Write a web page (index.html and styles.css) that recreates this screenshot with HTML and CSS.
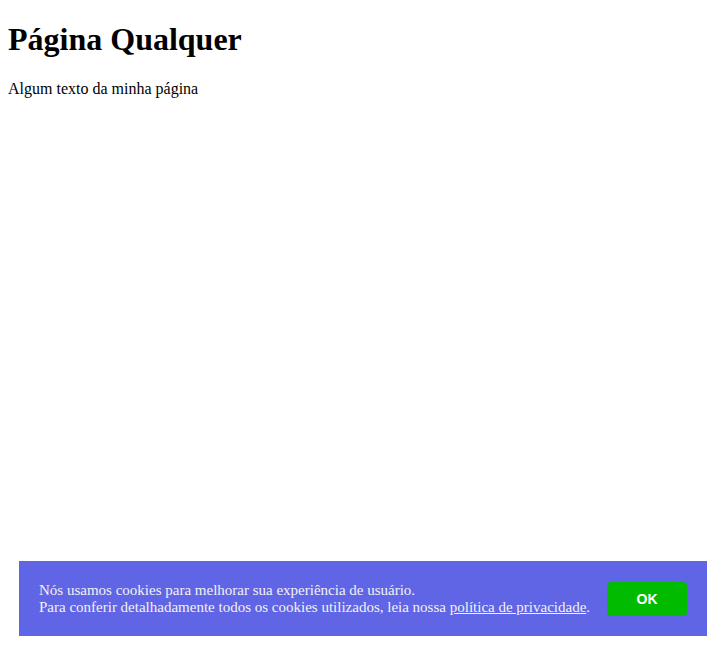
FILE: index.html
```html
<!DOCTYPE html>
<html lang="pt-BR">
<head>
<meta charset="utf-8">
<title>Página Qualquer</title>
<link rel="stylesheet" href="styles.css">
</head>
<body>
<h1 class="title">Página Qualquer</h1>
<p class="text">Algum texto da minha página</p>

<div class="cookie-banner">
  <div class="cookie-text">
    Nós usamos cookies para melhorar sua experiência de usuário.<br>
    Para conferir detalhadamente todos os cookies utilizados, leia nossa <a class="cookie-link" href="#">política de privacidade</a>.
  </div>
  <button class="cookie-btn" type="button">OK</button>
</div>
</body>
</html>
```

FILE: styles.css
```css
body {
  margin: 0 8px 8px;
  font-family: "Liberation Serif", "Times New Roman", serif;
  color: #000;
  background: #fff;
}

.title {
  font-size: 32px;
  font-weight: bold;
  margin: 21.44px 0;
}

.text {
  font-size: 16px;
  margin: 16px 0;
}

.cookie-banner {
  position: fixed;
  left: 19px;
  right: 16px;
  bottom: 16px;
  box-sizing: border-box;
  height: 75px;
  padding: 0 20px;
  background: #5f65e4;
  display: flex;
  align-items: center;
  justify-content: space-between;
}

.cookie-text {
  font-family: "Liberation Serif", "Times New Roman", serif;
  font-size: 15px;
  line-height: 17px;
  color: #f2f2f2;
}

.cookie-link {
  color: #f2f2f2;
  text-decoration: underline;
}

.cookie-btn {
  width: 80px;
  height: 34px;
  border: none;
  border-radius: 4px;
  background: #00bb00;
  color: #fff;
  font-family: "Liberation Sans", Arial, sans-serif;
  font-weight: bold;
  font-size: 14px;
  padding: 0;
  cursor: pointer;
}
```
